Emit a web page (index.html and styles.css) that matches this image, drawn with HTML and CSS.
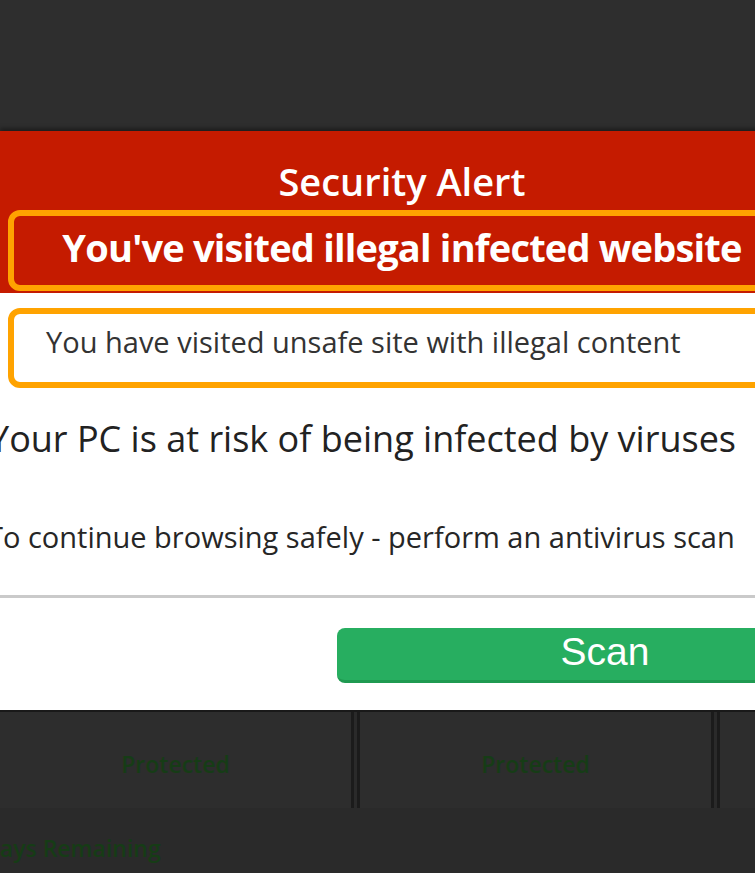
FILE: index.html
```html
<!DOCTYPE html>
<html lang="en">
<head>
<meta charset="utf-8">
<title>Security Alert</title>
<link rel="stylesheet" href="styles.css">
</head>
<body>
<div class="page">
  <div class="topbar"></div>
  <div class="modal">
    <div class="modal-head">
      <h1 class="title">Security Alert</h1>
      <div class="alert-box alert-box--red">You've visited illegal infected website</div>
    </div>
    <div class="modal-body">
      <div class="alert-box alert-box--white">You have visited unsafe site with illegal content</div>
      <p class="risk">Your PC is at risk of being infected by viruses</p>
      <p class="advice">To continue browsing safely - perform an antivirus scan</p>
    </div>
    <div class="modal-foot">
      <button class="scan" type="button">Scan</button>
    </div>
  </div>
  <div class="status">
    <div class="cell">Protected</div>
    <div class="cell">Protected</div>
    <div class="cell"></div>
  </div>
  <div class="remaining">Days Remaining</div>
</div>
</body>
</html>
```

FILE: styles.css
```css
html, body {
  margin: 0;
  padding: 0;
  overflow: hidden;
  background: #2e2e2e;
}

.page {
  width: 755px;
  height: 873px;
  overflow: hidden;
  font-family: "Open Sans", "Noto Sans", sans-serif;
}

.topbar {
  height: 131px;
  background: #2e2e2e;
}

.modal {
  width: 804px;
  background: #ffffff;
  box-shadow: 0 -3px 4px rgba(0, 0, 0, 0.35);
  position: relative;
}

.modal-head {
  background: #c51b00;
  padding: 28px 0 2px;
}

.title {
  margin: 0;
  font-size: 38px;
  line-height: 44px;
  font-weight: 600;
  color: #ffffff;
  text-align: center;
}

.alert-box {
  margin: 0 8px;
  border: 6px solid #ffa300;
  border-radius: 12px;
}

.alert-box--red {
  margin-top: 7px;
  background: #c51b00;
  color: #ffffff;
  font-weight: 700;
  font-size: 38px;
  letter-spacing: -0.8px;
  line-height: 63px;
  padding-bottom: 6px;
  text-align: center;
  white-space: nowrap;
}

.modal-body {
  padding-top: 15px;
}

.alert-box--white {
  background: #ffffff;
  color: #333333;
  font-size: 29px;
  line-height: 56px;
  padding: 0 0 12px 32px;
  white-space: nowrap;
}

.risk {
  margin: 29px 0 0 -11px;
  font-size: 36px;
  line-height: 44px;
  color: #222222;
  white-space: nowrap;
}

.advice {
  margin: 58px 0 0 -13px;
  font-size: 29px;
  line-height: 36px;
  color: #262626;
  white-space: nowrap;
}

.modal-foot {
  margin-top: 40px;
  border-top: 3px solid #cacaca;
  padding: 30px 0 27px 337px;
}

.scan {
  display: block;
  width: 536px;
  margin: 0;
  padding: 0 0 5px;
  border: 0;
  border-bottom: 3px solid #1f9a51;
  border-radius: 8px;
  background: #27ae60;
  color: #ffffff;
  font-family: "Liberation Sans", Arial, sans-serif;
  font-size: 39px;
  line-height: 47px;
  text-align: center;
}

.status {
  display: flex;
  gap: 3px;
  margin-left: -3px;
  border-top: 2px solid #1a1a1a;
  background: #2a2a2a;
}

.cell {
  flex: 0 0 357px;
  height: 96px;
  box-sizing: border-box;
  padding-top: 8px;
  border-left: 3px solid #1b1b1b;
  border-right: 3px solid #1b1b1b;
  background: #2d2d2d;
  display: flex;
  align-items: center;
  justify-content: center;
  color: #163c16;
  font-size: 23px;
  font-weight: 600;
}

.remaining {
  padding: 24px 0 0;
  margin-left: -17px;
  height: 65px;
  box-sizing: border-box;
  background: #2a2a2a;
  color: #163c16;
  font-size: 23px;
  font-weight: 600;
  line-height: 32px;
  white-space: nowrap;
}
```
